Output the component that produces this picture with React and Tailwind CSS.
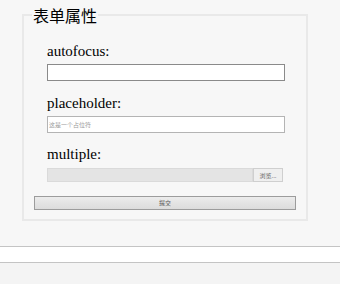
export default function App() {
  const cjk = { fontFamily: '"Noto Sans CJK SC", sans-serif' };
  return (
    <div className="w-[340px] h-[284px] bg-[#f7f7f7] overflow-hidden flex flex-col" style={{ fontFamily: '"Liberation Serif", "Noto Sans CJK SC", serif' }}>
      <fieldset className="ml-[22px] mt-[4px] w-[286px] min-w-0 h-[217px] border-2 border-[#e9e9e9] pl-[10px]">
        <legend className="-ml-[2px] px-[1px] text-[16px] leading-[22px] text-black" style={cjk}>
          表单属性
        </legend>
        <div className="ml-[13px] mt-[17px] text-[15px] leading-[17px] text-black">autofocus:</div>
        <input className="ml-[13px] mt-[4px] block w-[238px] h-[17px] bg-white border border-[#8a8a8a] outline-none" />
        <div className="ml-[13px] mt-[14px] text-[15px] leading-[17px] text-black">placeholder:</div>
        <input
          className="ml-[13px] mt-[4px] block w-[238px] h-[17px] bg-white border border-[#b4b4b4] outline-none px-[1px] text-[6px] placeholder:text-[#9a9a9a]"
          placeholder="这是一个占位符"
          style={cjk}
        />
        <div className="ml-[13px] mt-[13px] text-[15px] leading-[17px] text-black">multiple:</div>
        <div className="ml-[13px] mt-[5px] flex w-[236px] h-[14px]">
          <div className="flex-1 bg-[#e4e4e4] border border-[#dadada]" />
          <div className="w-[30px] bg-[#efefef] border border-[#cfcfcf] flex items-center justify-center text-[6px] text-[#666]" style={cjk}>
            浏览...
          </div>
        </div>
        <button className="mt-[14px] block w-[262px] h-[14px] border border-[#9c9c9c] bg-gradient-to-b from-[#ececec] to-[#dcdcdc] text-[6px] leading-none text-[#555]" style={cjk}>
          提交
        </button>
      </fieldset>
      <div className="mt-[25px] h-[17px] bg-white border-y border-[#c4c4c4]" />
      <div className="flex-1 bg-[#f4f4f4]" />
    </div>
  );
}
